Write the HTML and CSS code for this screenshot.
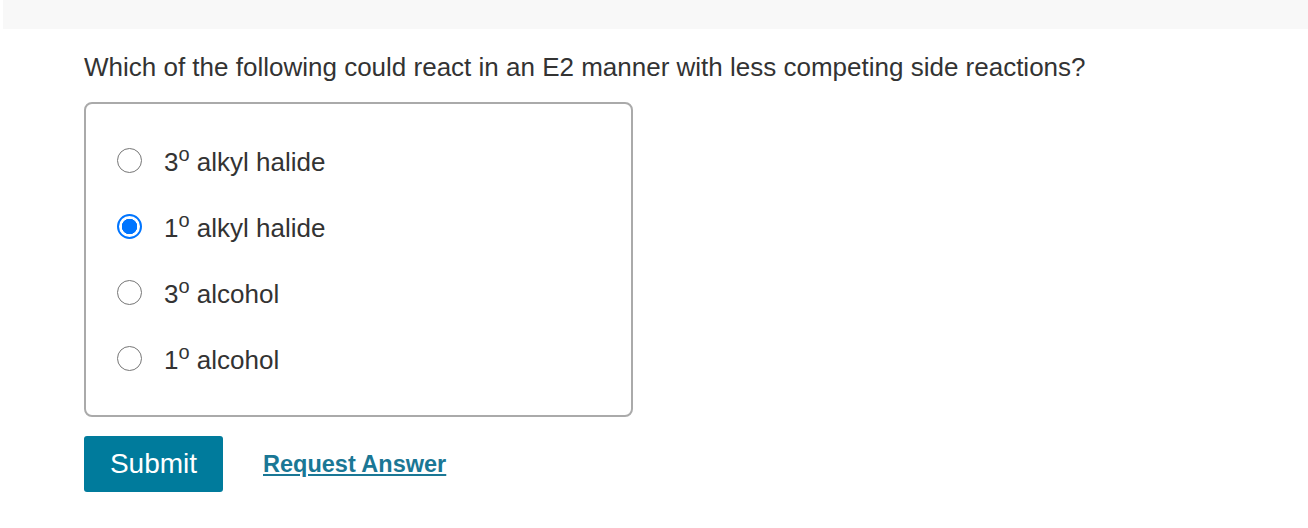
FILE: index.html
```html
<!DOCTYPE html>
<html>
<head>
<meta charset="utf-8">
<link rel="stylesheet" href="styles.css">
</head>
<body>
<div class="topbar"></div>
<main class="content">
  <p class="question">Which of the following could react in an E2 manner with less competing side reactions?</p>
  <div class="choices">
    <label class="choice"><span class="radio"></span><span class="label">3<sup>o</sup> alkyl halide</span></label>
    <label class="choice"><span class="radio checked"></span><span class="label">1<sup>o</sup> alkyl halide</span></label>
    <label class="choice"><span class="radio"></span><span class="label">3<sup>o</sup> alcohol</span></label>
    <label class="choice"><span class="radio"></span><span class="label">1<sup>o</sup> alcohol</span></label>
  </div>
  <div class="actions">
    <button class="submit">Submit</button>
    <a class="request" href="#">Request Answer</a>
  </div>
</main>
</body>
</html>
```
FILE: styles.css
```css
html, body {
  margin: 0;
  padding: 0;
  background: #fff;
  font-family: "Liberation Sans", Arial, sans-serif;
  color: #333;
}
.topbar {
  margin-left: 3px;
  height: 29px;
  background: #f8f8f8;
}
.content {
  padding: 0 0 0 84px;
}
.question {
  margin: 22px 0 0 0;
  font-size: 26px;
  line-height: 32px;
  color: #333;
}
.choices {
  margin-top: 19px;
  box-sizing: border-box;
  width: 549px;
  border: 2px solid #aaa;
  border-radius: 8px;
  padding: 32px 0 33px 31px;
  display: flex;
  flex-direction: column;
  gap: 18px;
}
.choice {
  display: flex;
  align-items: center;
  height: 48px;
  gap: 22px;
}
.radio {
  width: 25px;
  height: 25px;
  box-sizing: border-box;
  border: 1px solid #767676;
  border-radius: 50%;
  background: #fff;
  flex: none;
}
.radio.checked {
  border: 2px solid #0075ff;
  background: radial-gradient(circle, #0075ff 0 7.5px, #fff 8px);
}
.label {
  font-size: 26px;
  color: #333;
  padding-top: 4px;
}
.label sup {
  font-size: 20px;
  vertical-align: 10px;
  line-height: 0;
}
.actions {
  margin-top: 19px;
  display: flex;
  align-items: center;
  gap: 40px;
}
.submit {
  width: 139px;
  height: 56px;
  background: #007b9c;
  color: #fff;
  border: none;
  border-radius: 3px;
  font-family: "Liberation Sans", Arial, sans-serif;
  font-size: 28px;
  padding: 0;
}
.request {
  font-size: 23.5px;
  font-weight: bold;
  color: #1a7795;
  text-decoration: underline;
}
```
